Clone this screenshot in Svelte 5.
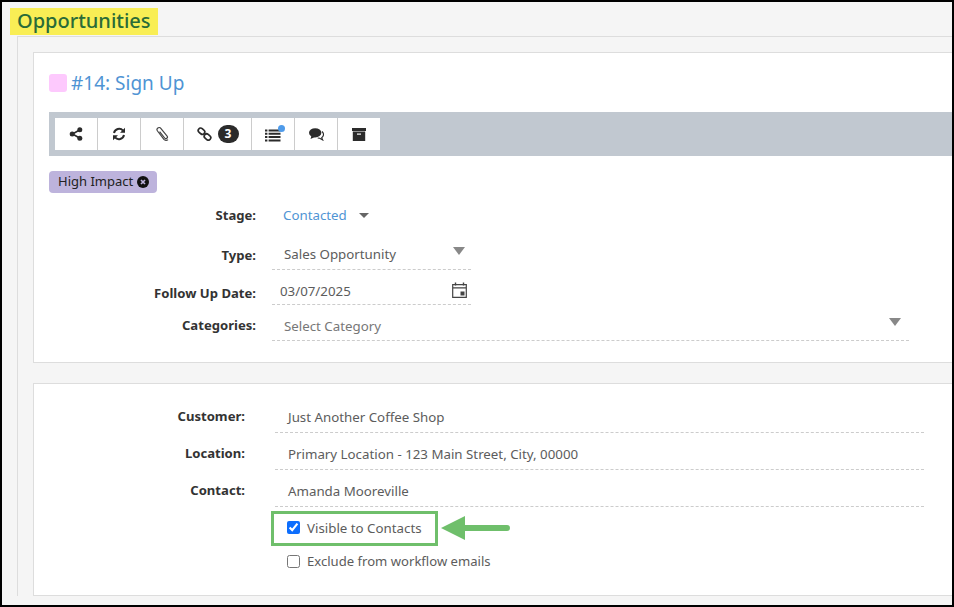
<script lang="ts">
	const customerRows = [
		{ label: 'Customer:', value: 'Just Another Coffee Shop' },
		{ label: 'Location:', value: 'Primary Location - 123 Main Street, City, 00000' },
		{ label: 'Contact:', value: 'Amanda Mooreville' }
	];
</script>

<div class="frame">
	<h1 class="page-title"><span>Opportunities</span></h1>

	<div class="panel">
		<section class="card top-card">
			<h2 class="opp-title"><i class="swatch"></i>#14: Sign Up</h2>

			<div class="toolbar">
				<div class="btn-group">
					<button aria-label="Share">
						<svg width="14" height="14" viewBox="0 0 14 14">
							<path d="M10.5 3 3.500 7l7 4" stroke="#2b2b2b" stroke-width="1.6" fill="none" />
							<circle cx="3.200" cy="7" r="2.500" fill="#2b2b2b" />
							<circle cx="10.800" cy="2.800" r="2.500" fill="#2b2b2b" />
							<circle cx="10.800" cy="11.200" r="2.500" fill="#2b2b2b" />
						</svg>
					</button>
					<button aria-label="Refresh">
						<svg width="14" height="14" viewBox="0 0 14 14">
							<path d="M2 6a5.200 5.200 0 0 1 9-2.400M12 8a5.200 5.200 0 0 1-9 2.400" stroke="#2b2b2b" stroke-width="2" fill="none" />
							<path d="M13 .8v5H8zM1 13.200v-5h5z" fill="#2b2b2b" />
						</svg>
					</button>
					<button aria-label="Attachments">
						<svg width="14" height="14" viewBox="0 0 14 14">
							<path d="M4.600 4.600 9.700 11a1.500 1.500 0 0 0 2.400-1.900L5.800 1.400A2.100 2.100 0 0 0 2.500 4l6.400 8.300a2.900 2.900 0 0 0 4.100.3" stroke="#444" stroke-width="1.200" fill="none" />
						</svg>
					</button>
					<button class="wide" aria-label="Links">
						<svg width="15" height="14" viewBox="0 0 15 14">
							<rect x="1" y="1.800" width="7" height="4.800" rx="2.400" transform="rotate(40 4.500 4.200)" stroke="#2b2b2b" stroke-width="1.700" fill="none" />
							<rect x="7" y="7.600" width="7" height="4.800" rx="2.400" transform="rotate(40 10.500 10)" stroke="#2b2b2b" stroke-width="1.700" fill="none" />
						</svg>
						<b class="count">3</b>
					</button>
					<button aria-label="Tasks">
						<span class="list-icon">
							<svg width="16" height="13" viewBox="0 0 16 13">
								<path d="M0 1.500h2.400M3.600 1.500H15.500M0 4.800h2.400M3.600 4.800H15.500M0 8.100h2.400M3.600 8.100H15.500M0 11.400h2.400M3.600 11.400H15.500" stroke="#2b2b2b" stroke-width="2" />
							</svg>
							<i class="dot"></i>
						</span>
					</button>
					<button aria-label="Comments">
						<svg width="15" height="13" viewBox="0 0 15 13">
							<path d="M13 3.500c1 .8 1.500 1.800 1.500 3 0 1.300-.7 2.400-1.800 3.200l1 2.300-3-1.700-2-.3" fill="none" stroke="#2b2b2b" stroke-width="1.100" />
							<ellipse cx="6.200" cy="4.800" rx="6.200" ry="4.600" fill="#2b2b2b" />
							<path d="M2.500 7.500 1.500 11 6 9z" fill="#2b2b2b" />
						</svg>
					</button>
					<button aria-label="Archive">
						<svg width="14" height="13" viewBox="0 0 14 13">
							<path d="M0 0h14v3H0zM.8 3.600h12.400V13H.8z" fill="#2b2b2b" />
							<path d="M5 5.500h4v1.200H5z" fill="#fff" />
						</svg>
					</button>
				</div>
			</div>

			<div class="tag">
				<span>High Impact</span>
				<svg width="12" height="12" viewBox="0 0 12 12">
					<circle cx="6" cy="6" r="6" fill="#111" />
					<path d="m4 4 4 4m0-4-4 4" stroke="#bdb3dc" stroke-width="1.700" />
				</svg>
			</div>

			<div class="field stage">
				<span class="label">Stage:</span>
				<span class="stage-value">Contacted<i class="caret small"></i></span>
			</div>
			<div class="field type">
				<span class="label">Type:</span>
				<div class="control short">Sales Opportunity<i class="caret"></i></div>
			</div>
			<div class="field date">
				<span class="label">Follow Up Date:</span>
				<div class="control short date-control">
					03/07/2025
					<svg width="15" height="16" viewBox="0 0 15 16">
						<path d="M.7 2.700h13.600v12.600H.7zM.7 5.800h13.600" fill="none" stroke="#444" stroke-width="1.200" />
						<path d="M3.500 .5v3M11.500 .5v3" stroke="#444" stroke-width="1.400" />
						<rect x="8.500" y="9.500" width="4" height="4" fill="#444" />
					</svg>
				</div>
			</div>
			<div class="field cats">
				<span class="label">Categories:</span>
				<div class="control long placeholder">Select Category<i class="caret"></i></div>
			</div>
		</section>

		<section class="card bottom-card">
			{#each customerRows as row}
				<div class="customer-row">
					<span class="label">{row.label}</span>
					<div class="customer-value">{row.value}</div>
				</div>
			{/each}

			<div class="checks">
				<div class="highlight-wrap">
					<label class="check highlighted">
						<input type="checkbox" checked />
						Visible to Contacts
					</label>
					<svg class="arrow" width="70" height="26" viewBox="0 0 70 26">
						<path d="M0 13 24 1v9h42a3 3 0 0 1 0 6H24v9z" fill="#6fbf6b" />
					</svg>
				</div>
				<label class="check plain">
					<input type="checkbox" />
					Exclude from workflow emails
				</label>
			</div>
		</section>
	</div>
</div>

<style>
	:global(body) {
		margin: 0;
		background: #f5f5f5;
	}
	.frame {
		box-sizing: border-box;
		width: 954px;
		height: 607px;
		border: 2px solid #000;
		overflow: hidden;
		background: #f5f5f5;
		font-family: 'Noto Sans', 'Open Sans', sans-serif;
		font-size: 13.3px;
		color: #5c5c5c;
	}
	.page-title {
		margin: 6px 0 0 8px;
		height: 28px;
		font-size: 20px;
		font-weight: 500;
		line-height: 25px;
	}
	.page-title span {
		display: inline-block;
		height: 27px;
		padding: 0 7px;
		background: #f9ee55;
		color: #2a6b38;
	}
	.panel {
		margin-left: 15px;
		padding: 15px 0 0 15px;
		border-top: 1px solid #ddd;
		border-left: 1px solid #ddd;
	}
	.card {
		box-sizing: border-box;
		background: #fff;
		border: 1px solid #ddd;
		border-right: none;
	}
	.top-card {
		height: 311px;
		padding: 0 0 0 15px;
	}
	.opp-title {
		display: flex;
		align-items: center;
		height: 59px;
		margin: 0;
		font-size: 19px;
		font-weight: 400;
		color: #4f94d4;
	}
	.swatch {
		width: 18px;
		height: 18px;
		margin-right: 4px;
		border-radius: 3px;
		background: #fdc9fd;
	}
	.toolbar {
		height: 44px;
		box-sizing: border-box;
		padding: 6px;
		background: #c1c8d0;
	}
	.btn-group {
		display: flex;
		width: max-content;
		height: 32px;
		background: #fff;
	}
	.btn-group button {
		display: flex;
		align-items: center;
		justify-content: center;
		gap: 6px;
		width: 43px;
		padding: 0;
		border: 0;
		border-right: 1px solid #ccc;
		background: none;
		font: inherit;
	}
	.btn-group button:last-child {
		border-right: 0;
		width: 42px;
	}
	.btn-group button.wide {
		width: 68px;
	}
	.count {
		width: 21px;
		height: 18px;
		border-radius: 9px;
		background: #2b2b2b;
		color: #fff;
		font-size: 12px;
		line-height: 18px;
		font-weight: 700;
		text-align: center;
	}
	.list-icon {
		position: relative;
		display: flex;
		top: 1px;
	}
	.dot {
		position: absolute;
		top: -4px;
		right: -4px;
		width: 7px;
		height: 7px;
		border-radius: 50%;
		background: #4f9bea;
	}
	.tag {
		display: flex;
		align-items: center;
		gap: 4px;
		width: max-content;
		height: 22px;
		margin-top: 15px;
		padding: 0 8px 0 9px;
		border-radius: 4px;
		background: #bdb3dc;
		color: #222;
		font-size: 13px;
	}
	.tag span {
		position: relative;
		top: -1px;
	}
	.field {
		display: flex;
		align-items: center;
	}
	.label {
		flex: none;
		position: relative;
		font-weight: 700;
		font-size: 13.1px;
		color: #333;
		text-align: right;
	}
	.field .label {
		width: 207px;
		margin-right: 16px;
	}
	.stage {
		height: 26px;
		margin-top: 9px;
	}
	.stage-value {
		display: flex;
		align-items: center;
		margin-left: 11px;
		color: #4f94d4;
	}
	.caret {
		width: 0;
		height: 0;
		border-left: 6px solid transparent;
		border-right: 6px solid transparent;
		border-top: 8px solid #888;
	}
	.caret.small {
		margin-left: 12px;
		border-left-width: 5px;
		border-right-width: 5px;
		border-top: 5px solid #666;
	}
	.control {
		display: flex;
		align-items: center;
		justify-content: space-between;
		box-sizing: border-box;
		border-bottom: 1px dashed #ccc;
	}
	.short {
		width: 199px;
	}
	.long {
		width: 637px;
	}
	.type {
		margin-top: 5px;
	}
	.type .control {
		height: 37px;
		padding: 6px 6px 0 12px;
	}
	.type .caret {
		position: relative;
		top: -3px;
	}
	.type .label {
		top: 3px;
	}
	.date .control {
		height: 35px;
		padding: 8px 4px 0 8px;
	}
	.date .label {
		top: 5px;
	}
	.date-control svg {
		position: relative;
		top: -1px;
	}
	.cats .control {
		height: 36px;
		padding: 6px 8px 0 12px;
	}
	.cats .caret {
		position: relative;
		top: -4px;
	}
	.cats .label {
		top: 2px;
	}
	.placeholder {
		color: #777;
	}
	.bottom-card {
		height: 213px;
		margin-top: 20px;
		padding-top: 12px;
	}
	.customer-row {
		display: flex;
		align-items: center;
		height: 37px;
	}
	.customer-row .label {
		width: 211px;
		top: 1px;
	}
	.customer-value {
		box-sizing: border-box;
		width: 649px;
		height: 37px;
		margin-left: 30px;
		padding: 11px 0 0 13px;
		line-height: 20px;
		border-bottom: 1px dashed #ccc;
	}
	.checks {
		margin-left: 237px;
		margin-top: 4px;
	}
	.highlight-wrap {
		position: relative;
		width: max-content;
	}
	.check {
		display: flex;
		align-items: center;
		gap: 7px;
	}
	.check input {
		width: 13px;
		height: 13px;
		margin: 0;
		accent-color: #0d6efd;
	}
	.highlighted {
		box-sizing: border-box;
		width: 167px;
		height: 35px;
		padding: 0 0 2px 13px;
		border: 3px solid #6fbf6b;
	}
	.arrow {
		position: absolute;
		left: 170px;
		top: 4px;
	}
	.plain {
		margin: 5px 0 0 16px;
		height: 20px;
		font-size: 13.1px;
	}
</style>
